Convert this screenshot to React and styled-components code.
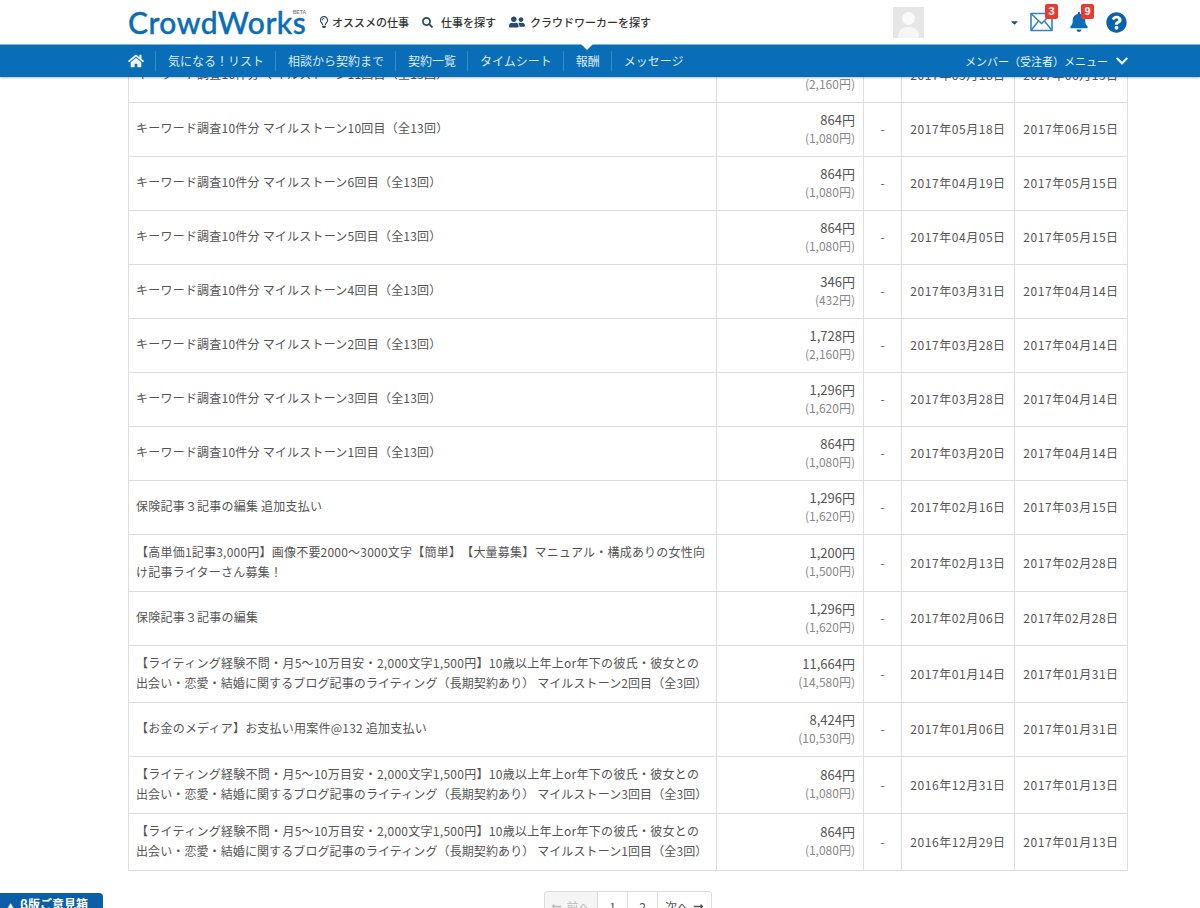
import React from 'react';
import styled, { createGlobalStyle } from 'styled-components';
import { FaHome, FaSearch, FaQuestionCircle, FaBell, FaChevronDown, FaRegLightbulb, FaUserFriends, FaCaretDown, FaLongArrowAltLeft, FaLongArrowAltRight } from 'react-icons/fa';

const Global = createGlobalStyle`
  html, body { margin: 0; padding: 0; height: 908px; overflow: hidden; background: #fff; }
  body { font-family: "Liberation Sans", "Noto Sans CJK JP", sans-serif; color: #555; text-spacing-trim: space-all; }
  * { box-sizing: border-box; }
`;

const Page = styled.div`
  position: relative;
  width: 1200px;
  height: 908px;
  overflow: hidden;
  display: flex;
  flex-direction: column;
`;
const Header = styled.header`
  height: 44px;
  flex: none;
  padding-left: 128px;
  display: flex;
  align-items: center;
  background: #fff;
`;
const Logo = styled.div`
  position: relative;
  width: 178px;
  flex: none;
  font-family: "Lato", "Open Sans", sans-serif;
  font-size: 30px;
  font-weight: 500;
  line-height: 44px;
  letter-spacing: 0.5px;
  -webkit-text-stroke: 0.4px #0a6db8;
  color: #0a6db8;
`;
const Beta = styled.span`
  position: absolute;
  right: 0;
  top: 9px;
  font: bold 5px/6px "Liberation Sans", sans-serif;
  letter-spacing: 0;
  -webkit-text-stroke: 0;
  color: #888;
`;
const TopLink = styled.a`
  display: flex;
  align-items: center;
  gap: ${p => p.$gap}px;
  margin-left: ${p => p.$ml}px;
  font-size: 11px;
  font-weight: 500;
  font-family: "Noto Sans CJK JP", sans-serif;
  color: #333;
  white-space: nowrap;
  svg { color: #2a4a66; flex: none; }
`;
const Avatar = styled.div`
  margin-left: 242px;
  width: 31px;
  height: 31px;
  flex: none;
  background: #e8e8e8;
  svg { display: block; }
`;
const Caret = styled.span`
  margin-left: 85px;
  display: flex;
  color: #1f4d78;
  font-size: 11px;
`;
const IconWrap = styled.span`
  position: relative;
  display: flex;
  margin-left: ${p => p.$ml}px;
  color: ${p => p.$color || '#0a6db8'};
`;
const Badge = styled.span`
  position: absolute;
  top: -8px;
  right: -5px;
  width: 13px;
  height: 15px;
  border-radius: 2px;
  background: #ea3a2e;
  color: #fff;
  font: bold 11px/15px "Liberation Sans", sans-serif;
  text-align: center;
`;
const Nav = styled.nav`
  position: relative;
  z-index: 2;
  height: 33px;
  flex: none;
  display: flex;
  align-items: center;
  padding: 0 71px 0 128px;
  background: #0a6db8;
  border-top: 1px solid #7db6e0;
  box-shadow: 0 1px 2px rgba(0,0,0,.25);
  color: #dbeaf6;
  font-family: "Noto Sans CJK JP", sans-serif;
  font-size: 12px;
`;
const NavItem = styled.a`
  position: relative;
  height: 20px;
  line-height: 20px;
  padding: 0 11px 0 12px;
  border-left: 1px solid #3a8ac8;
  white-space: nowrap;
  ${p => p.$active && `
    &::before {
      content: "";
      position: absolute;
      left: 50%;
      top: -7px;
      margin-left: -6px;
      border: 6px solid transparent;
      border-top-color: #fff;
      border-bottom: none;
    }
  `}
`;
const HomeItem = styled.a`
  display: flex;
  align-items: center;
  height: 20px;
  padding-right: 11px;
  color: #eaf3fa;
`;
const NavRight = styled.a`
  margin-left: auto;
  display: flex;
  align-items: center;
  gap: 7px;
  font-size: 11px;
  color: #eaf3fa;
  white-space: nowrap;
`;
const Main = styled.main`
  flex: 1;
  min-height: 0;
  overflow: hidden;
  padding: 0 72px 0 128px;
`;
const Table = styled.table`
  margin-top: -29px;
  width: 1000px;
  table-layout: fixed;
  border-collapse: collapse;
  font-family: "Noto Sans CJK JP", sans-serif;
  font-size: 12px;
  color: #555;
`;
const Cell = styled.td`
  border: 1px solid #ddd;
  height: ${p => p.$h}px;
  padding: 0 8px 2px;
  vertical-align: middle;
`;
const TitleCell = styled(Cell)`
  padding: 0 4px 2px 7px;
  line-height: 20.5px;
  letter-spacing: 0.22px;
`;
const TitleLine = styled.span`
  display: block;
  white-space: nowrap;
  letter-spacing: ${p => p.$spacing}px;
`;
const PriceCell = styled(Cell)`
  text-align: right;
  font-size: 13px;
  line-height: 18px;
`;
const Gross = styled.div`
  font-size: 12px;
  color: #888;
`;
const DashCell = styled(Cell)`
  text-align: center;
`;
const DateCell = styled(Cell)`
  text-align: center;
  white-space: nowrap;
  padding: 0 0 2px;
  letter-spacing: 0.55px;
`;
const Pager = styled.ul`
  display: flex;
  justify-content: center;
  list-style: none;
  margin: 20px 0 0;
  padding: 0;
  font-family: "Noto Sans CJK JP", sans-serif;
  font-size: 12px;
`;
const PageItem = styled.li`
  display: flex;
  align-items: center;
  justify-content: center;
  gap: 4px;
  width: ${p => p.$w}px;
  height: 30px;
  border: 1px solid #ddd;
  border-left-width: ${p => p.$first ? 1 : 0}px;
  border-radius: ${p => p.$first ? '3px 0 0 3px' : p.$last ? '0 3px 3px 0' : '0'};
  background: ${p => p.$off ? '#f5f5f5' : '#fff'};
  color: ${p => p.$off ? '#bbb' : '#555'};
`;
const Feedback = styled.a`
  position: absolute;
  left: 0;
  bottom: 0;
  width: 103px;
  height: 15px;
  padding: 3px 0 0 7px;
  border-radius: 0 4px 0 0;
  background: #0a5fa8;
  color: #fff;
  font: bold 12px/15px "Noto Sans CJK JP", sans-serif;
  white-space: nowrap;
`;
const FeedbackArrow = styled.span`
  margin-right: 6px;
  font-size: 7px;
`;

const Envelope = () => (
  <svg width="23" height="20" viewBox="0 0 23 20" fill="none" stroke="#2f86cc" strokeWidth="1.6" strokeLinejoin="round">
    <rect x="1" y="1.5" width="21" height="17" />
    <path d="M1 1.5l10.5 10L22 1.5M1 18.5l7.5-9.5M22 18.5L14.5 9" />
  </svg>
);

const kw = n => `キーワード調査10件分 マイルストーン${n}回目（全13回）`;
const lw = n => (
  <>
    <TitleLine $spacing={0.28}>【ライティング経験不問・月5〜10万目安・2,000文字1,500円】10歳以上年上or年下の彼氏・彼女との</TitleLine>
    <TitleLine $spacing={0.1}>出会い・恋愛・結婚に関するブログ記事のライティング（長期契約あり） マイルストーン{n}回目（全3回）</TitleLine>
  </>
);
const rows = [
  [kw(11), '1,728', '2,160', '2017年05月18日', '2017年06月15日', 54],
  [kw(10), '864', '1,080', '2017年05月18日', '2017年06月15日', 54],
  [kw(6), '864', '1,080', '2017年04月19日', '2017年05月15日', 54],
  [kw(5), '864', '1,080', '2017年04月05日', '2017年05月15日', 54],
  [kw(4), '346', '432', '2017年03月31日', '2017年04月14日', 54],
  [kw(2), '1,728', '2,160', '2017年03月28日', '2017年04月14日', 54],
  [kw(3), '1,296', '1,620', '2017年03月28日', '2017年04月14日', 54],
  [kw(1), '864', '1,080', '2017年03月20日', '2017年04月14日', 54],
  ['保険記事３記事の編集 追加支払い', '1,296', '1,620', '2017年02月16日', '2017年03月15日', 54],
  ['【高単価1記事3,000円】画像不要2000〜3000文字【簡単】【大量募集】マニュアル・構成ありの女性向け記事ライターさん募集！', '1,200', '1,500', '2017年02月13日', '2017年02月28日', 57],
  ['保険記事３記事の編集', '1,296', '1,620', '2017年02月06日', '2017年02月28日', 54],
  [lw(2), '11,664', '14,580', '2017年01月14日', '2017年01月31日', 57],
  ['【お金のメディア】お支払い用案件@132 追加支払い', '8,424', '10,530', '2017年01月06日', '2017年01月31日', 54],
  [lw(3), '864', '1,080', '2016年12月31日', '2017年01月13日', 57],
  [lw(1), '864', '1,080', '2016年12月29日', '2017年01月13日', 57],
];
const navItems = ['気になる！リスト', '相談から契約まで', '契約一覧', 'タイムシート', '報酬', 'メッセージ'];

export default function App() {
  return (
    <Page>
      <Global />
      <Header>
        <Logo>CrowdWorks<Beta>BETA</Beta></Logo>
        <TopLink $ml={12} $gap={2}><FaRegLightbulb size={12} />オススメの仕事</TopLink>
        <TopLink $ml={13} $gap={8}><FaSearch size={11} />仕事を探す</TopLink>
        <TopLink $ml={13} $gap={5}><FaUserFriends size={16} />クラウドワーカーを探す</TopLink>
        <Avatar>
          <svg width="31" height="31" viewBox="0 0 31 31">
            <rect width="31" height="31" fill="#e6e6e6" />
            <circle cx="15.5" cy="11.5" r="6.5" fill="#fafafa" />
            <path d="M5 31c0-8 4-11 10.5-11S26 23 26 31z" fill="#f6f6f6" />
          </svg>
        </Avatar>
        <Caret><FaCaretDown /></Caret>
        <IconWrap $ml={10}><Envelope /><Badge>3</Badge></IconWrap>
        <IconWrap $ml={16}><FaBell size={20} /><Badge>9</Badge></IconWrap>
        <IconWrap $ml={17} $color="#0a62ab"><FaQuestionCircle size={21} /></IconWrap>
      </Header>
      <Nav>
        <HomeItem><FaHome size={16} /></HomeItem>
        {navItems.map(n => <NavItem key={n} $active={n === '報酬'}>{n}</NavItem>)}
        <NavRight>メンバー（受注者）メニュー<FaChevronDown size={14} /></NavRight>
      </Nav>
      <Main>
        <Table>
          <colgroup>
            <col style={{ width: 588 }} />
            <col style={{ width: 147 }} />
            <col style={{ width: 38 }} />
            <col style={{ width: 113 }} />
            <col style={{ width: 113 }} />
          </colgroup>
          <tbody>
            {rows.map((r, i) => (
              <tr key={i}>
                <TitleCell $h={r[5]}>{r[0]}</TitleCell>
                <PriceCell $h={r[5]}>{r[1]}円<Gross>({r[2]}円)</Gross></PriceCell>
                <DashCell $h={r[5]}>-</DashCell>
                <DateCell $h={r[5]}>{r[3]}</DateCell>
                <DateCell $h={r[5]}>{r[4]}</DateCell>
              </tr>
            ))}
          </tbody>
        </Table>
        <Pager>
          <PageItem $w={54} $first $off><FaLongArrowAltLeft size={11} />前へ</PageItem>
          <PageItem $w={30}>1</PageItem>
          <PageItem $w={30}>2</PageItem>
          <PageItem $w={54} $last>次へ<FaLongArrowAltRight size={11} /></PageItem>
        </Pager>
      </Main>
      <Feedback><FeedbackArrow>▲</FeedbackArrow>β版ご意見箱</Feedback>
    </Page>
  );
}
